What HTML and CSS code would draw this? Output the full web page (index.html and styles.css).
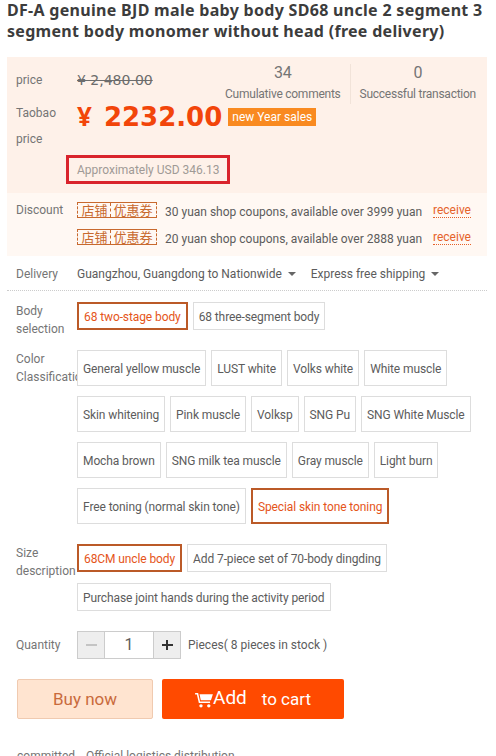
FILE: index.html
```html
<!DOCTYPE html>
<html lang="en">
<head>
  <meta charset="UTF-8">
  <title>DF-A genuine BJD male baby body</title>
  <link rel="stylesheet" href="styles.css">
</head>
<body>

<h1 class="title">DF-A genuine BJD male baby body SD68 uncle 2 segment 3 segment body monomer without head (free delivery)</h1>

<div class="price-box">
  <div class="price-top">
    <div class="row-old">
      <div class="label">price</div>
      <div class="old-price">¥ 2,480.00</div>
    </div>
    <div class="stats">
      <div class="stat stat-first">
        <div class="stat-num">34</div>
        <div>Cumulative comments</div>
      </div>
      <div class="stat">
        <div class="stat-num">0</div>
        <div>Successful transaction</div>
      </div>
    </div>
  </div>
  <div class="row-now">
    <div class="label label-now">Taobao price</div>
    <div class="now-price"><span class="yen">¥</span>2232.00</div>
    <span class="promo">new Year sales</span>
  </div>
  <div class="usd">Approximately USD 346.13</div>
</div>

<div class="discount-box">
  <div class="label label-discount">Discount</div>
  <div class="coupons">
    <div class="coupon">
      <span class="coupon-tag"><span>店铺</span><span class="coupon-right">优惠券</span></span>
      <span class="coupon-text">30 yuan shop coupons, available over 3999 yuan</span>
      <a class="receive">receive</a>
    </div>
    <div class="coupon">
      <span class="coupon-tag"><span>店铺</span><span class="coupon-right">优惠券</span></span>
      <span class="coupon-text">20 yuan shop coupons, available over 2888 yuan</span>
      <a class="receive">receive</a>
    </div>
  </div>
</div>

<div class="delivery">
  <div class="label">Delivery</div>
  <div class="delivery-item">Guangzhou, Guangdong to Nationwide <i class="caret"></i></div>
  <div class="delivery-item">Express free shipping <i class="caret"></i></div>
</div>

<div class="options">
  <div class="option-row">
    <div class="label opt-label">Body selection</div>
    <div class="chips">
      <span class="chip on">68 two-stage body</span>
      <span class="chip">68 three-segment body</span>
    </div>
  </div>
  <div class="option-row">
    <div class="label opt-label clip">Color Classification</div>
    <div class="chips chips-tall">
      <span class="chip">General yellow muscle</span>
      <span class="chip">LUST white</span>
      <span class="chip">Volks white</span>
      <span class="chip">White muscle</span>
      <span class="chip">Skin whitening</span>
      <span class="chip">Pink muscle</span>
      <span class="chip">Volksp</span>
      <span class="chip">SNG Pu</span>
      <span class="chip">SNG White Muscle</span>
      <span class="chip">Mocha brown</span>
      <span class="chip">SNG milk tea muscle</span>
      <span class="chip">Gray muscle</span>
      <span class="chip">Light burn</span>
      <span class="chip">Free toning (normal skin tone)</span>
      <span class="chip on">Special skin tone toning</span>
    </div>
  </div>
  <div class="option-row">
    <div class="label opt-label">Size description</div>
    <div class="chips">
      <span class="chip on">68CM uncle body</span>
      <span class="chip">Add 7-piece set of 70-body dingding</span>
      <span class="chip">Purchase joint hands during the activity period</span>
    </div>
  </div>
</div>

<div class="quantity">
  <div class="label">Quantity</div>
  <div class="stepper">
    <span class="step minus"></span>
    <span class="qty">1</span>
    <span class="step plus"></span>
  </div>
  <div class="stock">Pieces( 8 pieces in stock )</div>
</div>

<div class="actions">
  <a class="btn-buy">Buy now</a>
  <a class="btn-cart">
    <svg class="cart-icon" viewBox="0 0 20 18" width="18" height="16">
      <path d="M0 1h3.4l2.2 9.6h11.2v1.8H4.2L2 2.8H0z" fill="#fff"/>
      <path d="M5 2.6h15l-2.2 6.8H6.4z" fill="#fff"/>
      <circle cx="6.6" cy="15.6" r="1.9" fill="#fff"/>
      <circle cx="15.4" cy="15.6" r="1.9" fill="#fff"/>
    </svg><span class="add">Add</span><span class="to-cart">to cart</span>
  </a>
</div>

<div class="promise">
  <span>committed</span>
  <span>Official logistics distribution</span>
</div>

</body>
</html>
```

FILE: styles.css
```css
* { box-sizing: border-box; }

html, body {
  height: 756px;
  overflow: hidden;
}

body {
  margin: 0;
  padding: 0 9px 0 7px;
  background: #fff;
  color: #5c5c5c;
  font-family: Roboto, "Noto Sans CJK SC", sans-serif;
  font-size: 12px;
}

.title {
  height: 57px;
  margin: 0;
  font-family: "Noto Sans", "Noto Sans CJK SC", sans-serif;
  font-size: 16px;
  line-height: 21px;
  font-weight: 700;
  letter-spacing: 0.3px;
  color: #3c3c3c;
}

.label {
  width: 61px;
  flex-shrink: 0;
  color: #757575;
}

.price-box {
  height: 136px;
  padding: 7px 0 0 9px;
  background: #fef1e9;
}

.price-top {
  display: flex;
  justify-content: space-between;
  height: 34px;
}

.row-old {
  display: flex;
  padding-top: 8px;
}

.row-old .label {
  padding-top: 1px;
}

.old-price {
  color: #6c6c6c;
  font-family: "DejaVu Sans", sans-serif;
  font-size: 14px;
  text-decoration: line-through;
}

.stats {
  display: flex;
  padding-right: 11px;
  letter-spacing: -0.25px;
}

.stat {
  height: 40px;
  padding-left: 9px;
  color: #757575;
  text-align: center;
}

.stat-first {
  padding: 0 9px 0 0;
  border-right: 1px solid #f1e3d9;
}

.stat-num {
  margin-bottom: 5px;
  font-size: 16px;
  line-height: 18px;
}

.row-now {
  display: flex;
  align-items: flex-start;
  height: 57px;
}

.label-now {
  padding-top: 2px;
  line-height: 26px;
}

.now-price {
  color: #f2450a;
  font-family: "DejaVu Sans", sans-serif;
  font-weight: 700;
  font-size: 26px;
  line-height: 36px;
}

.yen {
  margin-right: 12px;
  font-family: "Open Sans", sans-serif;
}

.promo {
  margin: 10px 0 0 6px;
  padding: 0 4px;
  background: #f98a20;
  color: #fff;
  line-height: 18px;
}

.usd {
  width: 164px;
  height: 29px;
  margin-left: 50px;
  padding-left: 8px;
  border: 3px solid #d9232c;
  color: #a09a96;
  line-height: 25px;
  white-space: nowrap;
}

.discount-box {
  display: flex;
  height: 63px;
  padding: 9px 0 0 9px;
  background: #fff8f3;
}

.label-discount {
  padding-top: 1px;
}

.coupon {
  display: flex;
  align-items: center;
  height: 16px;
  margin-bottom: 11px;
}

.coupon-tag {
  display: inline-flex;
  justify-content: center;
  width: 80px;
  height: 16px;
  margin-right: 8px;
  border: 1px dashed #c8692e;
  border-top-style: solid;
  border-bottom-style: solid;
  color: #c8692e;
  font-family: "Noto Sans CJK SC", sans-serif;
  font-size: 13px;
  line-height: 14px;
}

.coupon-right {
  margin-left: 2px;
  padding-left: 3px;
  border-left: 1px dashed #c8692e;
}

.coupon-text {
  width: 268px;
  padding-top: 3px;
  color: #5c5c5c;
  white-space: nowrap;
}

.receive {
  border-bottom: 1px dotted #e5622a;
  color: #e5622a;
  line-height: 14px;
}

.delivery {
  display: flex;
  align-items: center;
  height: 35px;
  padding: 1px 0 0 9px;
  border-bottom: 1px dotted #ccc;
}

.delivery-item {
  margin-right: 15px;
  color: #5c5c5c;
}

.caret {
  display: inline-block;
  margin: 0 0 2px 3px;
  border: 4px solid transparent;
  border-top-color: #666;
  border-bottom: 0;
}

.options {
  padding: 11px 0 0 9px;
}

.option-row {
  display: flex;
  margin-bottom: 11px;
}

.opt-label {
  line-height: 18px;
}

.clip {
  overflow: hidden;
}

.chips {
  display: flex;
  flex-wrap: wrap;
  flex: 1;
  gap: 11px 5px;
  padding-bottom: 9px;
  letter-spacing: -0.1px;
}

.chip {
  height: 28px;
  padding: 0 5px;
  border: 1px solid #ddd;
  color: #5c5c5c;
  line-height: 28px;
  white-space: nowrap;
}

.chip.on {
  border: 2px solid #bb5a28;
  color: #e5551a;
  line-height: 26px;
}

.chips-tall {
  gap: 10px 5px;
}

.chips-tall .chip {
  height: 36px;
  line-height: 36px;
}

.chips-tall .chip.on {
  line-height: 34px;
}

.quantity {
  display: flex;
  align-items: center;
  padding-left: 9px;
}

.stepper {
  display: flex;
  height: 28px;
  margin-right: 7px;
  border: 1px solid #ccc;
}

.step {
  position: relative;
  width: 27px;
  background: #eee;
}

.step::before,
.plus::after {
  content: "";
  position: absolute;
  left: 8px;
  top: 12px;
  width: 11px;
  height: 2px;
  background: #333;
}

.minus {
  border-right: 1px solid #ccc;
}

.minus::before {
  background: #c4c4c4;
}

.plus {
  border-left: 1px solid #ccc;
}

.plus::after {
  left: 12px;
  top: 8px;
  width: 2px;
  height: 10px;
}

.qty {
  width: 48px;
  font-size: 16px;
  line-height: 26px;
  text-align: center;
}

.stock {
  color: #5c5c5c;
}

.actions {
  display: flex;
  gap: 9px;
  margin: 20px 0 0 10px;
}

.btn-buy,
.btn-cart {
  display: flex;
  align-items: center;
  justify-content: center;
  height: 40px;
  border-radius: 2px;
  font-size: 17px;
}

.btn-buy {
  width: 136px;
  border: 1px solid #f0cab0;
  background: #ffe4d0;
  color: #c96a3c;
}

.btn-cart {
  width: 182px;
  background: #ff4a00;
  color: #fff;
}

.cart-icon {
  margin-top: 2px;
}

.add {
  margin: -3px 15px 0 0;
  font-size: 19px;
}

.promise {
  display: flex;
  gap: 11px;
  margin-top: 30px;
  padding-left: 10px;
  color: #757575;
}
```
